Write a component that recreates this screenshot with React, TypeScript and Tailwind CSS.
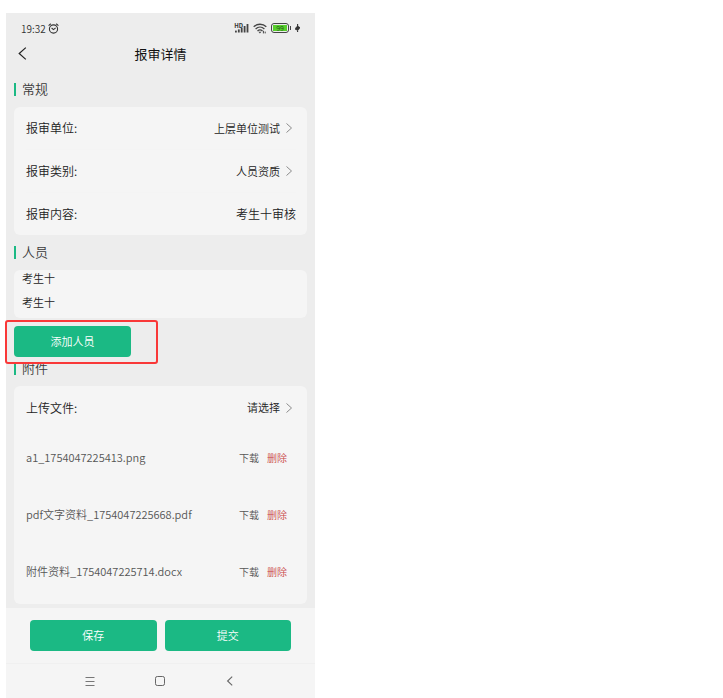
import type { ReactNode } from "react";

const details = [
  { label: "报审单位:", value: "上层单位测试", link: true },
  { label: "报审类别:", value: "人员资质", link: true },
  { label: "报审内容:", value: "考生十审核", link: false },
];

const people = ["考生十", "考生十"];

const files = [
  "a1_1754047225413.png",
  "pdf文字资料_1754047225668.pdf",
  "附件资料_1754047225714.docx",
];

function ArrowRight() {
  return (
    <svg className="ml-1.5 mr-1 h-[10px] w-[6px]" viewBox="0 0 6 10" fill="none" stroke="#808080" strokeWidth="0.9">
      <path d="M0.5 0.5L5.5 5L0.5 9.5" />
    </svg>
  );
}

function SectionTitle({ children }: { children: ReactNode }) {
  return (
    <h2 className="mb-[9px] flex h-[18px] items-center gap-1.5 text-[13px] font-[350] text-[#3a3a3a]">
      <span className="h-[13px] w-0.5 bg-[#1bb984]" />
      {children}
    </h2>
  );
}

function StatusBar() {
  return (
    <div className="flex h-[30px] items-center justify-between pr-[15px] pl-[15px] text-[10px] text-[#333]">
      <div className="flex items-center gap-0.5">
        <span>19:32</span>
        <svg className="h-[11px] w-[11px]" viewBox="0 0 11 11" fill="none" stroke="#333" strokeWidth="1.1">
          <circle cx="5.5" cy="6" r="4.1" />
          <path d="M0.6 2.6L2.8 0.8M10.4 2.6L8.2 0.8M3.6 5L5.5 6.6L7.6 4.8" />
        </svg>
      </div>
      <div className="flex items-center gap-1">
        <div className="flex items-end">
          <span className="self-start text-[6px] leading-[5px] font-bold">HD</span>
          <svg className="-ml-2 h-[10px] w-[14px]" viewBox="0 0 14 10" fill="#444">
            <rect x="0" y="7.6" width="1.8" height="1.9" />
            <rect x="2.9" y="6.4" width="1.8" height="3.1" />
            <rect x="5.8" y="4.8" width="1.8" height="4.7" />
            <rect x="8.7" y="3" width="1.8" height="6.5" />
            <rect x="11.6" y="1" width="1.8" height="8.5" />
          </svg>
        </div>
        <svg className="h-[11px] w-[14px]" viewBox="0 0 14 11" fill="none" stroke="#444" strokeWidth="1.3">
          <path d="M0.7 3.8C4.2 0.4 9.8 0.4 13.3 3.8M2.6 5.9C5.2 3.5 8.8 3.5 11.4 5.9M4.5 7.9C6 6.6 8 6.6 9.5 7.9" />
          <path d="M5.4 8.7H8.4L6.9 10.4Z" fill="#444" stroke="none" />
          <path d="M10.4 7.8V10.4M12.2 8.6V10.4" strokeWidth="1" />
        </svg>
        <div className="flex items-center">
          <span className="flex h-[10px] w-[18px] items-center justify-center rounded-[3px] border border-[#444] p-px">
            <span className="flex h-full w-full items-center justify-center bg-[#57cf2c] text-[7px] leading-[6px] text-[#24521a]">
              99
            </span>
          </span>
          <span className="ml-px h-1 w-px bg-[#444]" />
        </div>
        <svg className="h-[8px] w-[5px]" viewBox="0 0 5 8" fill="none" stroke="#333" strokeWidth="1.1">
          <path d="M2.6 0V8M0.4 4.6L2.6 2.2L4.4 3.6L0.6 5.2L2.6 6.2L4.6 4.2" />
        </svg>
      </div>
    </div>
  );
}

export default function App() {
  return (
    <div className="min-h-screen bg-white pt-[13px] pl-1.5 font-['Noto_Sans_CJK_SC',sans-serif] font-[350]">
      <main className="w-full max-w-[309px] bg-[#ededed]">
        <StatusBar />

        <header className="grid h-[21px] grid-cols-[1fr_auto_1fr] items-center px-3">
          <button type="button" aria-label="返回" className="w-3">
            <svg className="h-[13px] w-[9px]" viewBox="0 0 9 13" fill="none" stroke="#222" strokeWidth="1.2">
              <path d="M7.8 0.6L1.2 6.5L7.8 12.4" />
            </svg>
          </button>
          <h1 className="text-[13px] leading-5 font-normal text-[#111]">报审详情</h1>
        </header>

        <div className="px-2 pt-4 pb-1">
          <SectionTitle>常规</SectionTitle>
          <div className="divide-y divide-[#f4f4f4] rounded-md bg-[#f5f5f5] pr-[11px] pl-3">
            {details.map((item) => (
              <div key={item.label} className="flex h-[43px] items-center justify-between text-[12px] text-[#222] last:h-[42px]">
                <span>{item.label}</span>
                {item.link ? (
                  <button type="button" className="flex items-center text-[11px]">
                    {item.value}
                    <ArrowRight />
                  </button>
                ) : (
                  <span>{item.value}</span>
                )}
              </div>
            ))}
          </div>

          <div className="pt-2">
            <SectionTitle>人员</SectionTitle>
            <ul className="space-y-2 rounded-md bg-[#f5f5f5] px-2 pb-2 text-[11px] leading-4 text-[#222]">
              {people.map((name, i) => (
                <li key={i}>{name}</li>
              ))}
            </ul>
          </div>

          <div className="relative mt-2 w-[117px]">
            <button type="button" className="h-[31px] w-full rounded-sm bg-[#1bb984] text-[11px] text-white">
              添加人员
            </button>
            <div className="pointer-events-none absolute -top-1.5 -left-[9px] h-11 w-[153px] rounded-[3px] border-2 border-[#f93838]" />
          </div>

          <div className="pt-0.5">
            <SectionTitle>附件</SectionTitle>
            <div className="rounded-md bg-[#f5f5f5] pr-[11px] pb-1 pl-3">
              <div className="flex h-[43px] items-center justify-between text-[12px] text-[#222]">
                <span>上传文件:</span>
                <button type="button" className="flex items-center text-[11px]">
                  请选择
                  <ArrowRight />
                </button>
              </div>
              <ul>
                {files.map((name) => (
                  <li key={name} className="flex h-[57px] items-center justify-between text-[11px] text-[#555]">
                    <span>{name}</span>
                    <span className="flex gap-2 pr-[9px] text-[10px]">
                      <button type="button">下载</button>
                      <button type="button" className="text-[#c9433f]">删除</button>
                    </span>
                  </li>
                ))}
              </ul>
            </div>
          </div>
        </div>

        <footer className="bg-[#f5f5f5]">
          <div className="grid grid-cols-2 gap-2 px-6 py-3 text-[11px] text-white">
            <button type="button" className="h-[31px] rounded-sm bg-[#1bb984]">保存</button>
            <button type="button" className="h-[31px] rounded-sm bg-[#1bb984]">提交</button>
          </div>
          <nav className="flex h-[35px] items-center justify-center gap-[60px] border-t border-[#f0f0f0] pr-px">
            <button type="button" aria-label="菜单">
              <svg className="h-[10px] w-[10px]" viewBox="0 0 10 10" stroke="#777" strokeWidth="1">
                <path d="M0.5 1.5H9.5M0.5 5.5H9.5M0.5 9.5H9.5" />
              </svg>
            </button>
            <button type="button" aria-label="主页">
              <svg className="h-[10px] w-[10px]" viewBox="0 0 10 10" fill="none" stroke="#666" strokeWidth="1">
                <rect x="0.5" y="0.5" width="9" height="9" rx="1.8" />
              </svg>
            </button>
            <button type="button" aria-label="后退">
              <svg className="h-[10px] w-[10px]" viewBox="0 0 10 10" fill="none" stroke="#666" strokeWidth="1.1">
                <path d="M7.2 0.6L2.6 5L7.2 9.4" />
              </svg>
            </button>
          </nav>
        </footer>
      </main>
    </div>
  );
}
